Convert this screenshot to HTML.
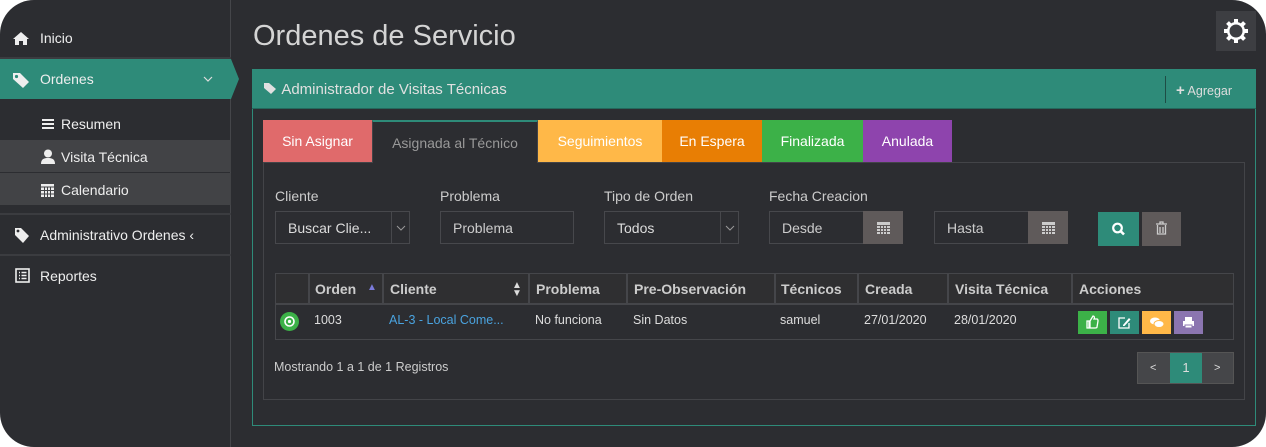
<!DOCTYPE html>
<html><head><meta charset="utf-8"><style>
*{box-sizing:border-box;margin:0;padding:0}
body{width:1266px;height:447px;background:#fff;font-family:"Liberation Sans","DejaVu Sans",sans-serif;overflow:hidden}
#app{position:absolute;left:0;top:0;width:1266px;height:447px;background:#2c2d31;border-radius:34px;overflow:hidden;color:#ddd}
.side{position:absolute;left:0;top:0;width:231px;height:447px;border-right:1px solid #45464a}
.it{position:absolute;left:0;width:231px;font-size:14px;color:#eee}
.it svg{position:absolute}
.sep{position:absolute;left:0;width:231px;height:2px;background:#3b3c40}
.abs{position:absolute}
.tab{position:absolute;top:120px;height:42px;line-height:42px;text-align:center;color:#fff;font-size:14px}
.lab{position:absolute;top:188px;font-size:14px;color:#ccc}
.inp{position:absolute;top:211px;height:33px;border:1px solid #47484c;font-size:14px;color:#ccc;line-height:33px;padding-left:12px}
.cal{position:absolute;top:211px;height:33px;width:40px;background:#5f5a5a}
.th{position:absolute;top:273px;height:32px;line-height:32px;font-size:14px;font-weight:bold;color:#ccc;padding-left:6px;border-right:2px solid #45464a}
.td{position:absolute;top:313px;font-size:12.5px;color:#ddd}
.ab{position:absolute;top:311px;width:29px;height:23px}
</style></head><body><div id="app">
<div class="side">
 <div class="it" style="top:30px"><svg style="left:13px;top:2px" width="16" height="13" viewBox="0 0 16 13"><path d="M8 0L0 7h2v6h4V9h4v4h4V7h2z" fill="#eee"/></svg><span style="position:absolute;left:40px">Inicio</span></div>
 <div class="sep" style="top:57px"></div>
 <div class="abs" style="left:0;top:59px;width:231px;height:40px;background:#2e8b79"></div>
 <div class="abs" style="left:231px;top:59px;width:0;height:0;border-top:20px solid transparent;border-bottom:20px solid transparent;border-left:8px solid #2e8b79"></div>
 <div class="it" style="top:71px"><svg style="left:12px;top:1px" width="19" height="16" viewBox="0 0 19 16"><path d="M1 1h7l9 9-6 6-10-9z" fill="#eee"/><circle cx="4.5" cy="4.5" r="1.6" fill="#2e8b79"/></svg><span style="position:absolute;left:40px">Ordenes</span><svg style="left:203px;top:5px" width="10" height="6"><path d="M1 1l4 4 4-4" stroke="#ddd" fill="none" stroke-width="1.2"/></svg></div>
 <div class="it" style="top:116px"><svg style="left:42px;top:3px" width="12" height="10"><path d="M0 1h12M0 5h12M0 9h12" stroke="#eee" stroke-width="2"/></svg><span style="position:absolute;left:61px">Resumen</span></div>
 <div class="abs" style="left:0;top:140px;width:231px;height:32px;background:#424346"></div>
 <div class="abs" style="left:0;top:173px;width:231px;height:32px;background:#424346"></div>
 <div class="it" style="top:149px"><svg style="left:41px;top:0" width="14" height="15"><circle cx="7" cy="4.5" r="4" fill="#eee"/><path d="M0 15c0-5 3-6 7-6s7 1 7 6z" fill="#eee"/></svg><span style="position:absolute;left:61px">Visita Técnica</span></div>
 <div class="it" style="top:182px"><svg style="left:41px;top:0" width="13" height="15"><rect x="0" y="2" width="13" height="13" fill="#eee"/><path d="M0 5h13M0 8.5h13M0 12h13M3.5 5v10M6.5 5v10M9.5 5v10" stroke="#424346"/></svg><span style="position:absolute;left:61px">Calendario</span></div>
 <div class="sep" style="top:213px"></div>
 <div class="it" style="top:227px"><svg style="left:14px;top:0" width="16" height="17" viewBox="0 0 16 17"><path d="M1 1h6l8 8-6 7-8-8z" fill="#eee"/><circle cx="4" cy="4" r="1.4" fill="#2c2d31"/></svg><span style="position:absolute;left:40px">Administrativo Ordenes &lsaquo;</span></div>
 <div class="sep" style="top:254px"></div>
 <div class="it" style="top:268px"><svg style="left:15px;top:0" width="15" height="15"><rect x="1" y="1" width="13" height="13" fill="none" stroke="#eee" stroke-width="1.6"/><path d="M4 4.5h1M4 7.5h1M4 10.5h1M6.5 4.5h5M6.5 7.5h5M6.5 10.5h5" stroke="#eee" stroke-width="1.4"/></svg><span style="position:absolute;left:40px">Reportes</span></div>
</div>
<div class="abs" style="left:253px;top:20px;font-size:29px;color:#d4d4d4">Ordenes de Servicio</div>
<div class="abs" style="left:1216px;top:11px;width:40px;height:40px;background:#3d3e42"><svg width="40" height="40" viewBox="0 0 40 40"><g fill="#fff"><circle cx="20" cy="20" r="9"/><rect x="18" y="8" width="4" height="24"/><rect x="8" y="18" width="24" height="4"/><rect x="18" y="8" width="4" height="24" transform="rotate(45 20 20)"/><rect x="18" y="8" width="4" height="24" transform="rotate(-45 20 20)"/></g><circle cx="20" cy="20" r="6.5" fill="#3d3e42"/></svg></div>
<div class="abs" style="left:252px;top:69px;width:1004px;height:357px;border:1px solid #2e8b79"></div>
<div class="abs" style="left:252px;top:69px;width:1004px;height:40px;background:#2e8b79;border-bottom:1px solid #24685c"></div>
<div class="abs" style="left:263px;top:81px;font-size:15px;color:#e0e0e0"><svg width="15" height="13" viewBox="0 0 15 13" style="vertical-align:-1px"><path d="M1 1h5l7 6-5 5-7-6z" fill="#e0e0e0"/></svg> Administrador de Visitas Técnicas</div>
<div class="abs" style="left:1165px;top:76px;width:1px;height:27px;background:#1e4d45"></div>
<div class="abs" style="left:1176px;top:82px;font-size:12.5px;color:#ddd"><b style="font-size:15px">+</b> Agregar</div>
<div class="abs" style="left:263px;top:162px;width:982px;height:238px;border:1px solid #434448"></div>
<div class="tab" style="left:263px;width:109px;background:#e06a6b">Sin Asignar</div>
<div class="tab" style="left:372px;width:166px;background:#2c2d31;border-top:2px solid #2e8b79;border-left:1px solid #434448;border-right:1px solid #434448;height:43px;color:#999">Asignada al Técnico</div>
<div class="tab" style="left:538px;width:124px;background:#ffb848">Seguimientos</div>
<div class="tab" style="left:662px;width:100px;background:#e87e04">En Espera</div>
<div class="tab" style="left:762px;width:101px;background:#3cb148">Finalizada</div>
<div class="tab" style="left:863px;width:89px;background:#8e44ad">Anulada</div>
<div class="lab" style="left:275px">Cliente</div>
<div class="lab" style="left:440px">Problema</div>
<div class="lab" style="left:604px">Tipo de Orden</div>
<div class="lab" style="left:769px">Fecha Creacion</div>
<div class="inp" style="left:275px;width:135px;color:#ddd">Buscar Clie...</div>
<div class="abs" style="left:391px;top:212px;width:1px;height:31px;background:#47484c"></div>
<svg class="abs" style="left:396px;top:225px" width="10" height="6"><path d="M1 1l4 4 4-4" stroke="#999" fill="none"/></svg>
<div class="inp" style="left:440px;width:134px">Problema</div>
<div class="inp" style="left:604px;width:135px;color:#ddd">Todos</div>
<div class="abs" style="left:720px;top:212px;width:1px;height:31px;background:#47484c"></div>
<svg class="abs" style="left:725px;top:225px" width="10" height="6"><path d="M1 1l4 4 4-4" stroke="#999" fill="none"/></svg>
<div class="inp" style="left:769px;width:95px">Desde</div>
<div class="cal" style="left:863px"><svg width="40" height="33"><rect x="14" y="11" width="13" height="12" fill="#ccc"/><path d="M14 14.5h13M14 17.5h13M14 20.5h13M17.5 14v9M20.5 14v9M23.5 14v9" stroke="#5f5a5a"/></svg></div>
<div class="inp" style="left:934px;width:95px">Hasta</div>
<div class="cal" style="left:1028px"><svg width="40" height="33"><rect x="14" y="11" width="13" height="12" fill="#ccc"/><path d="M14 14.5h13M14 17.5h13M14 20.5h13M17.5 14v9M20.5 14v9M23.5 14v9" stroke="#5f5a5a"/></svg></div>
<div class="abs" style="left:1098px;top:212px;width:41px;height:34px;background:#2e8b79"><svg width="41" height="34"><circle cx="19.5" cy="16" r="4.3" fill="none" stroke="#fff" stroke-width="2.2"/><path d="M22.5 19l3.5 3.5" stroke="#fff" stroke-width="2.6"/></svg></div>
<div class="abs" style="left:1142px;top:212px;width:39px;height:34px;background:#5f5a5a"><svg width="39" height="34"><path d="M14 12h11M18 12v-2h3v2M15.5 13v9h8v-9M18 15v6M21 15v6" stroke="#ccc" fill="none" stroke-width="1.3"/></svg></div>
<div class="abs" style="left:275px;top:273px;width:959px;height:67px;border:1px solid #45464a"></div>
<div class="abs" style="left:276px;top:274px;width:957px;height:31px;background:#2f2f31;border-bottom:2px solid #45464a"></div>
<div class="th" style="left:276px;width:34px"></div>
<div class="th" style="left:309px;width:75px">Orden<span style="position:absolute;left:58px;top:-1px;color:#7b7bdb;font-size:10px">&#9650;</span></div>
<div class="th" style="left:384px;width:146px">Cliente<span style="position:absolute;left:128px;color:#ddd;font-size:10px;line-height:8px;top:9px">&#9650;<br>&#9660;</span></div>
<div class="th" style="left:530px;width:98px">Problema</div>
<div class="th" style="left:628px;width:148px">Pre-Observación</div>
<div class="th" style="left:775px;width:84px">Técnicos</div>
<div class="th" style="left:859px;width:90px">Creada</div>
<div class="th" style="left:949px;width:124px">Visita Técnica</div>
<div class="th" style="left:1073px;width:160px;border-right:none">Acciones</div>
<div class="abs" style="left:280px;top:312px;width:19px;height:19px;border-radius:50%;background:#3cb148"><svg width="19" height="19"><circle cx="9.5" cy="9.5" r="4.5" fill="none" stroke="#fff" stroke-width="1.6"/><circle cx="9.5" cy="9.5" r="1.6" fill="#fff"/></svg></div>
<div class="td" style="left:314px">1003</div>
<div class="td" style="left:389px;color:#4aa3df">AL-3 - Local Come...</div>
<div class="td" style="left:535px">No funciona</div>
<div class="td" style="left:633px">Sin Datos</div>
<div class="td" style="left:780px">samuel</div>
<div class="td" style="left:864px">27/01/2020</div>
<div class="td" style="left:954px">28/01/2020</div>
<div class="ab" style="left:1078px;background:#3cb148"><svg width="29" height="23"><path d="M9 10h2v7H9zM12 10l3-5c1 0 2 1 1 3h3c1 0 1 1 1 2l-1 6c0 1-1 1-2 1h-5z" fill="none" stroke="#fff" stroke-width="1.3"/></svg></div>
<div class="ab" style="left:1110px;background:#2e8b79"><svg width="29" height="23"><path d="M15 7H9v10h10v-5" fill="none" stroke="#fff" stroke-width="1.3"/><path d="M13 14l6-7 1.5 1.5-6 6.5h-1.5z" fill="#fff"/></svg></div>
<div class="ab" style="left:1142px;background:#ffb848"><svg width="29" height="23"><ellipse cx="13" cy="10" rx="5" ry="3.5" fill="#fff"/><ellipse cx="17" cy="13" rx="5" ry="3.5" fill="#fff" stroke="#ffb848"/></svg></div>
<div class="ab" style="left:1174px;background:#8b75b0"><svg width="29" height="23"><rect x="11" y="6" width="7" height="4" fill="#fff"/><rect x="9" y="10" width="11" height="5" fill="#fff"/><rect x="11" y="14" width="7" height="3" fill="#fff" stroke="#8b75b0"/></svg></div>
<div class="abs" style="left:274px;top:360px;font-size:12.5px;color:#ccc">Mostrando 1 a 1 de 1 Registros</div>
<div class="abs" style="left:1137px;top:352px;width:97px;height:32px;border:1px solid #555;background:#454649"></div>
<div class="abs" style="left:1170px;top:353px;width:32px;height:30px;background:#2e8b79;color:#ddd;font-size:13px;text-align:center;line-height:30px">1</div>
<div class="abs" style="left:1150px;top:362px;color:#ddd;font-size:11px">&lt;</div>
<div class="abs" style="left:1214px;top:362px;color:#ddd;font-size:11px">&gt;</div>
</div></body></html>
